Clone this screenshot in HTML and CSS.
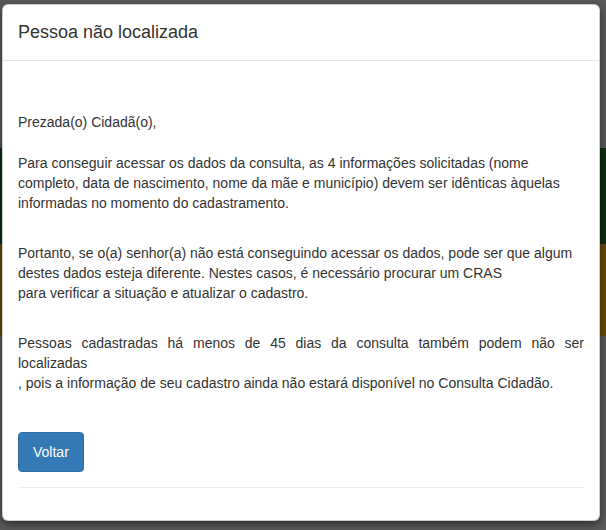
FILE: index.html
```html
<!DOCTYPE html>
<html lang="pt-BR">
<head>
    <meta charset="UTF-8">
    <meta name="viewport" content="width=device-width, initial-scale=1.0">
    <title>Pessoa não localizada</title>
    <link rel="stylesheet" href="styles.css">
</head>
<body>
    <!-- Modal shown over the page backdrop -->
    <div class="modal-dialog">
        <div class="modal-content">
            <div class="modal-header">
                <h4 class="modal-title">Pessoa não localizada</h4>
            </div>
            <div class="modal-body">
                <p class="greeting">Prezada(o) Cidadã(o),</p>
                <p>Para conseguir acessar os dados da consulta, as 4 informações solicitadas (nome completo, data de nascimento, nome da mãe e município) devem ser idênticas àquelas informadas no momento do cadastramento.</p>
                <p>Portanto, se o(a) senhor(a) não está conseguindo acessar os dados, pode ser que algum destes dados esteja diferente. Nestes casos, é necessário procurar um CRAS<br>para verificar a situação e atualizar o cadastro.</p>
                <p class="justify">Pessoas cadastradas há menos de 45 dias da consulta também podem não ser localizadas<br>, pois a informação de seu cadastro ainda não estará disponível no Consulta Cidadão.</p>
                <button type="button" class="btn btn-primary">Voltar</button>
                <hr class="divider">
            </div>
        </div>
    </div>
</body>
</html>
```

FILE: styles.css
```css
html, body {
    height: 100%;
}

body {
    margin: 0;
    font-family: "Liberation Sans", Arial, Helvetica, sans-serif;
    font-size: 14px;
    line-height: 20px;
    color: #333;
    background: linear-gradient(to bottom,
        #5a5a5a 0, #5a5a5a 148px,
        #0b2f10 148px, #0b2f10 244px,
        #6a480c 244px, #6a480c 336px,
        #5a5a5a 336px, #5a5a5a 100%);
}

.modal-dialog {
    padding: 4px 6px 0 2px;
}

.modal-content {
    background-color: #fff;
    border: 1px solid rgba(0, 0, 0, 0.2);
    border-radius: 6px;
    box-shadow: 0 3px 9px rgba(0, 0, 0, 0.5);
}

.modal-header {
    padding: 15px;
    border-bottom: 1px solid #e5e5e5;
}

.modal-title {
    margin: 0;
    font-size: 18px;
    font-weight: normal;
    line-height: 25px;
}

.modal-body {
    padding: 15px;
}

.modal-body p {
    margin: 0 0 30px;
}

.modal-body .greeting {
    margin: 36px 0 21px;
}

.modal-body .justify {
    text-align: justify;
    margin-bottom: 39px;
}

.btn {
    display: inline-block;
    padding: 9px 14px;
    font-family: inherit;
    font-size: 14px;
    line-height: 20px;
    border: 1px solid transparent;
    border-radius: 4px;
    cursor: pointer;
}

.btn-primary {
    color: #fff;
    background-color: #337ab7;
    border-color: #2e6da4;
}

.divider {
    margin: 15px 0 17px;
    border: 0;
    border-top: 1px solid #eee;
}
```
